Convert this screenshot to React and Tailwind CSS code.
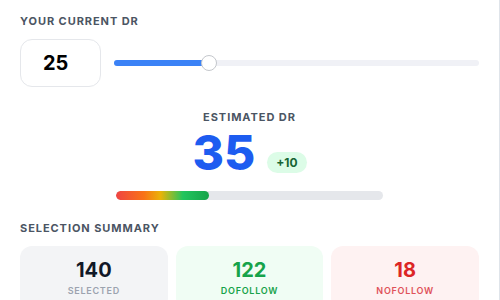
import React, { useState } from 'react'

const stats = [
  { value: 140, label: 'Selected', box: 'bg-[#f3f4f6]', num: 'text-[#111827]', sub: 'text-[#9ca3af]' },
  { value: 122, label: 'Dofollow', box: 'bg-[#f0fdf4]', num: 'text-[#16a34a]', sub: 'text-[#16a34a]' },
  { value: 18, label: 'Nofollow', box: 'bg-[#fef2f2]', num: 'text-[#dc2626]', sub: 'text-[#e0525a]' },
]

export default function App() {
  const [dr] = useState(25)
  const estimated = 35

  return (
    <div className="h-[300px] w-[500px] overflow-hidden border-r border-[#dfe4ea] bg-white px-5 pt-[13px] font-['Inter',sans-serif]">
      <div className="text-[11px] font-bold leading-4 tracking-[0.085em] text-[#4b5563]">
        YOUR CURRENT DR
      </div>

      <div className="mt-[10px] flex items-center gap-[13px]">
        <div className="flex h-12 w-[81px] shrink-0 items-center rounded-xl border border-[#e5e7eb] pl-[22px] text-xl font-bold text-black">
          {dr}
        </div>
        <div className="relative h-4 flex-1">
          <div className="absolute left-0 right-0 top-[5px] h-[6px] rounded-full bg-[#f0f1f6]" />
          <div className="absolute left-0 top-[5px] h-[6px] rounded-full bg-[#3b82f6]" style={{ width: 'calc(25% + 8px)' }} />
          <div
            className="absolute top-0 h-4 w-4 rounded-full border border-[#c4c7cc] bg-white"
            style={{ left: 'calc((100% - 16px) * 0.25)' }}
          />
        </div>
      </div>

      <div className="mt-[22px] text-center text-[11px] font-bold leading-4 tracking-[0.085em] text-[#4b5563]">
        ESTIMATED DR
      </div>
      <div className="mt-1 flex items-end justify-center gap-3">
        <span className="text-5xl font-extrabold leading-none text-[#1d5cf0]">{estimated}</span>
        <span className="mb-1 rounded-full bg-[#dcfce7] px-[9px] py-[3px] text-xs font-bold leading-[15px] text-[#166534]">
          +10
        </span>
      </div>
      <div className="mx-auto mt-[14px] h-[9px] w-[267px] overflow-hidden rounded-full bg-[#e5e7eb]">
        <div
          className="h-full rounded-full bg-[linear-gradient(to_right,#ef4444_0%,#f97316_30%,#eab308_48%,#22c55e_72%,#16a34a_100%)]"
          style={{ width: `${estimated}%` }}
        />
      </div>

      <div className="mt-5 text-[11px] font-bold leading-4 tracking-[0.085em] text-[#4b5563]">
        SELECTION SUMMARY
      </div>
      <div className="mt-[10px] grid grid-cols-3 gap-2">
        {stats.map((s) => (
          <div key={s.label} className={`h-[64px] rounded-xl pt-[10px] text-center ${s.box}`}>
            <div className={`text-xl font-bold leading-7 ${s.num}`}>{s.value}</div>
            <div className={`text-[9px] font-semibold uppercase leading-[14px] tracking-[0.08em] ${s.sub}`}>
              {s.label}
            </div>
          </div>
        ))}
      </div>
    </div>
  )
}
